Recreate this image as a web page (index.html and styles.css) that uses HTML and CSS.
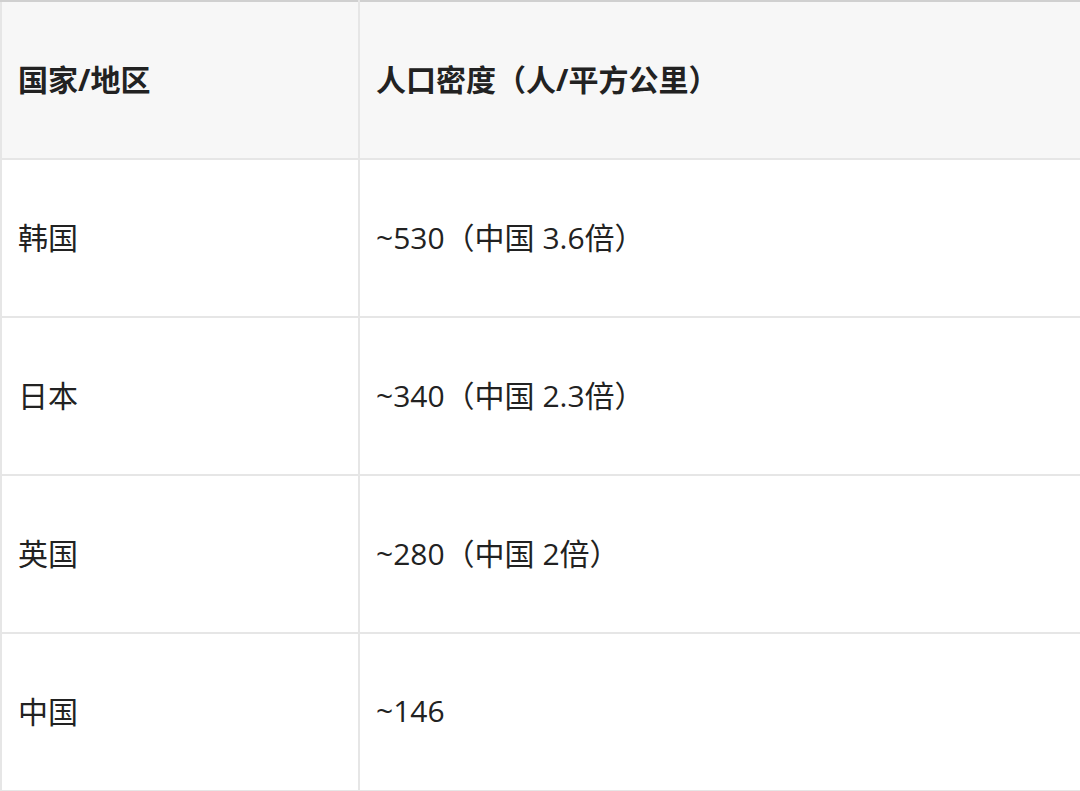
FILE: index.html
```html
<!DOCTYPE html>
<html lang="zh">
<head>
<meta charset="utf-8">
<link rel="stylesheet" href="styles.css">
</head>
<body>
<table class="tbl">
  <thead>
    <tr><th class="c1">国家/地区</th><th>人口密度（人/平方公里）</th></tr>
  </thead>
  <tbody>
    <tr><td class="c1">韩国</td><td>~530（中国 3.6倍）</td></tr>
    <tr><td class="c1">日本</td><td>~340（中国 2.3倍）</td></tr>
    <tr><td class="c1">英国</td><td>~280（中国 2倍）</td></tr>
    <tr><td class="c1">中国</td><td>~146</td></tr>
  </tbody>
</table>
</body>
</html>
```
FILE: styles.css
```css
html, body {
  margin: 0;
  padding: 0;
  background: #ffffff;
  overflow: hidden;
}
.tbl {
  border-collapse: collapse;
  width: 1100px;
  table-layout: fixed;
  font-family: "Open Sans", "Noto Sans CJK SC", sans-serif;
  font-size: 30px;
  color: #222222;
}
.tbl th, .tbl td {
  border: 2px solid #e6e6e6;
  height: 158px;
  box-sizing: border-box;
  padding: 0 16px 4px 16px;
  text-align: left;
  vertical-align: middle;
}
.tbl thead tr {
  background: #f7f7f7;
}
.tbl th {
  font-weight: 700;
  border-top-color: #d0d0d0;
}
.tbl .c1 {
  width: 358px;
}
```
